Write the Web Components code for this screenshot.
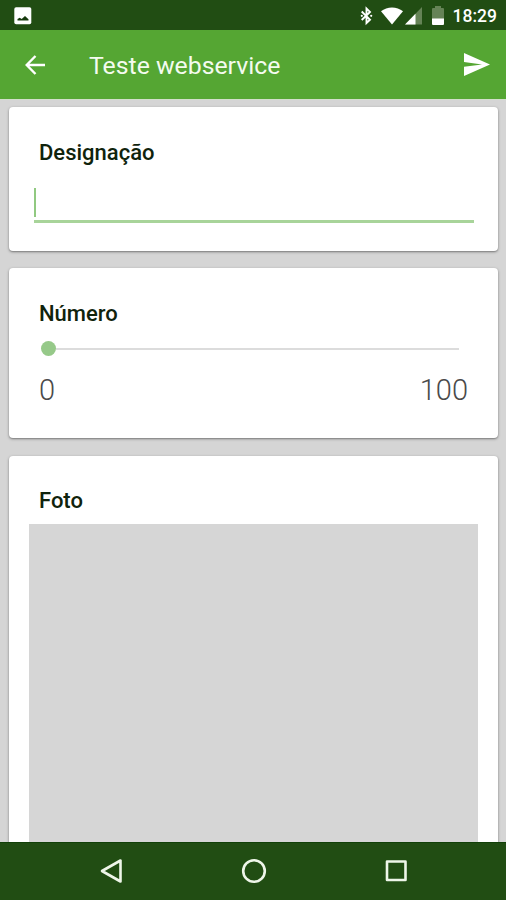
<!DOCTYPE html>
<html lang="pt">
<head>
<meta charset="utf-8">
<title>Teste webservice</title>
<style>
html, body { margin: 0; height: 100%; overflow: hidden; }
body { font-family: Roboto, "Liberation Sans", sans-serif; background: #d5d5d5; }
</style>
</head>
<body>
<form-screen></form-screen>
<script>
function define(name, markup) {
  const template = document.createElement('template');
  template.innerHTML = markup;
  customElements.define(name, class extends HTMLElement {
    constructor() {
      super();
      this.attachShadow({ mode: 'open' }).append(template.content.cloneNode(true));
    }
  });
}

define('status-bar', `
<style>
:host { display: flex; align-items: center; height: 30px; box-sizing: border-box; padding: 1px 9px 0 14px; background: #214d13; color: #fff; font-size: 17.5px; font-weight: 500; line-height: 30px; }
svg { display: block; flex: none; }
.space { flex: 1; }
</style>
<svg width="18" height="18" viewBox="0 0 18 18"><rect x=".3" y=".3" width="17" height="17" rx="1.8" fill="#fff"/><path d="M3.500 13.500v-1.500l2.200-1.300 2 1.300L11 9l3.500 3.300v1.200z" fill="#163a0c"/></svg>
<span class="space"></span>
<svg width="13" height="20" viewBox="0 0 13 20"><path d="M1.700 5.500L10 13.700 6.500 17V2.500L10 5.900 1.700 14" fill="none" stroke="#fff" stroke-width="1.900"/><circle cx="1.800" cy="9.800" r="1.100" fill="#fff"/><circle cx="11.200" cy="9.800" r="1.100" fill="#fff"/></svg>
<svg width="22" height="18" viewBox="0 0 22 18" style="margin-left:8px"><path d="M0 4.200C6-.9 16-.9 22 4.200L11 17.600z" fill="#fff"/></svg>
<svg width="17" height="18" viewBox="0 0 17 18" style="margin-left:2px"><path d="M0 17.500L17 0v17.500z" fill="#658356"/><path d="M0 17.500L10.500 6.700v10.800z" fill="#fff"/></svg>
<svg width="12" height="19" viewBox="0 0 12 19" style="margin-left:10px"><path d="M3 0h6v2h2q1 0 1 1v10H0V3q0-1 1-1h2z" fill="#658356"/><path d="M0 12.500h12V18q0 1-1 1H1q-1 0-1-1z" fill="#fff"/></svg>
<span style="margin-left:9px"><slot></slot></span>`);

define('app-bar', `
<style>
:host { display: flex; align-items: center; height: 69px; box-sizing: border-box; padding: 0 16px 0 25px; background: #55a633; color: #f4fbef; font-size: 24.8px; }
svg { display: block; flex: none; }
.title { flex: 1; margin-left: 44px; padding-top: 3px; line-height: 30px; white-space: nowrap; }
</style>
<svg width="20" height="20" viewBox="0 0 20 20"><path d="M20 10H2M10.500 1L1.700 10l8.800 9" fill="none" stroke="#fff" stroke-width="2.400"/></svg>
<span class="title"><slot></slot></span>
<svg width="26" height="23" viewBox="0 0 26 23"><path d="M0 0L26 11.500 0 23V13.800L18 11.500 0 9z" fill="#fff"/></svg>`);

define('form-card', `
<style>
:host { display: block; box-sizing: border-box; background: #fff; border-radius: 4px; box-shadow: 0 1px 3px rgba(0,0,0,.38), 0 1px 1px rgba(0,0,0,.12); padding: 32px 20px 0; }
h2 { margin: 0 0 0 10px; font-size: 22px; font-weight: 500; line-height: 28px; color: #10230c; }
</style>
<h2><slot name="title"></slot></h2>
<slot></slot>`);

define('text-input', `
<style>
:host { display: block; margin: 21px 4px 0 5px; height: 35px; box-sizing: border-box; border-bottom: 3px solid #a8d49a; }
i { display: block; width: 2px; height: 29px; background: #91c981; }
</style><i></i>`);

define('range-slider', `
<style>
:host { display: block; padding: 13px 10px 0 12px; }
.track { display: flex; align-items: center; height: 15px; padding-right: 9px; }
.thumb { width: 15px; height: 15px; border-radius: 50%; background: #96c989; }
.line { flex: 1; height: 2px; background: #dcdcdc; }
.labels { display: flex; justify-content: space-between; margin: 16px 0 0 -2px; font-size: 29px; font-weight: 300; line-height: 36px; color: #4a4a4a; }
</style>
<div class="track"><span class="thumb"></span><span class="line"></span></div>
<div class="labels"><slot name="min"></slot><slot name="max"></slot></div>`);

define('photo-area', `
<style>:host { display: block; height: 340px; margin-top: 9px; background: #d6d6d6; }</style>`);

define('nav-bar', `
<style>
:host { display: flex; align-items: center; justify-content: space-between; height: 58px; box-sizing: border-box; padding: 0 98px 1px 100px; background: #214d13; border-top: 1px solid #124009; }
svg { display: block; fill: none; stroke: #eef6e9; stroke-width: 2.600; stroke-linejoin: round; }
</style>
<svg width="24" height="26" viewBox="0 0 24 26"><path d="M2 13L20.500 2.500v21z"/></svg>
<svg width="26" height="26" viewBox="0 0 26 26"><circle cx="13" cy="13" r="10.800"/></svg>
<svg width="24" height="26" viewBox="0 0 24 26"><rect x="3" y="3.500" width="18.500" height="18.500"/></svg>`);

define('form-screen', `
<style>
:host { display: flex; flex-direction: column; width: 506px; height: 900px; overflow: hidden; }
main { flex: 1; min-height: 0; overflow: hidden; padding: 7px 8px 0 9px; background: #d5d5d5; border-top: 1px solid #d2decb; box-sizing: border-box; display: flex; flex-direction: column; gap: 17px; }
form-card { flex: none; }
</style>
<status-bar>18:29</status-bar>
<app-bar>Teste webservice</app-bar>
<main>
  <form-card style="height:144px"><span slot="title">Designação</span><text-input></text-input></form-card>
  <form-card style="height:170px"><span slot="title">Número</span><range-slider><span slot="min">0</span><span slot="max">100</span></range-slider></form-card>
  <form-card style="height:420px;margin-top:1px;padding-top:31px"><span slot="title">Foto</span><photo-area></photo-area></form-card>
</main>
<nav-bar></nav-bar>`);
</script>
</body>
</html>
